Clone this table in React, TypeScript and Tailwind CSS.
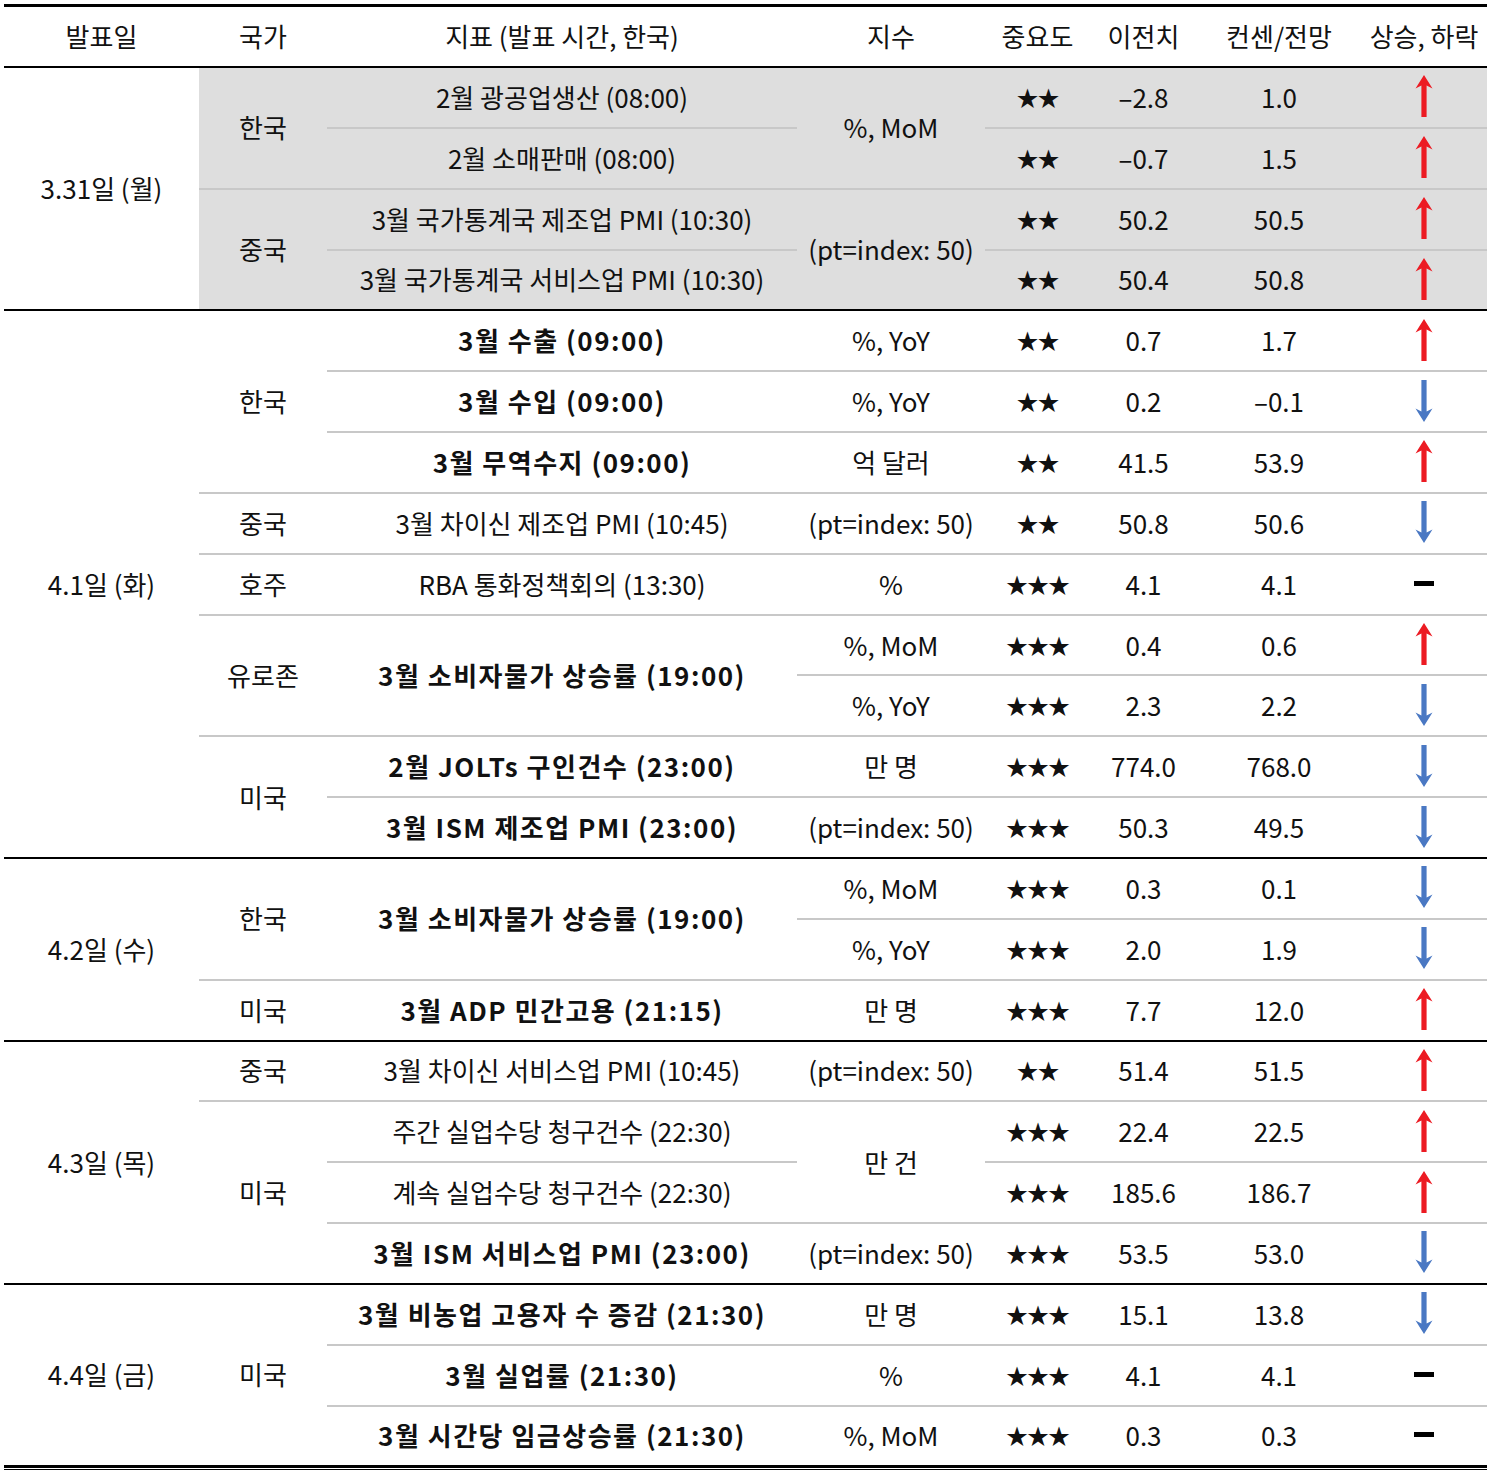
import React from 'react'

type Cell = { t: string; span?: number; bold?: boolean }
type Row = {
  date?: Cell
  country?: Cell
  ind?: Cell
  unit?: Cell
  stars: number
  prev: string
  cons: string
  dir: 'up' | 'down' | 'flat'
  last?: boolean
  gray?: boolean
}

const rows: Row[] = [
  // 3.31
  { gray: true, date: { t: '3.31일 (월)', span: 4 }, country: { t: '한국', span: 2 }, ind: { t: '2월 광공업생산 (08:00)' }, unit: { t: '%, MoM', span: 2 }, stars: 2, prev: '–2.8', cons: '1.0', dir: 'up' },
  { gray: true, ind: { t: '2월 소매판매 (08:00)' }, stars: 2, prev: '–0.7', cons: '1.5', dir: 'up' },
  { gray: true, country: { t: '중국', span: 2 }, ind: { t: '3월 국가통계국 제조업 PMI (10:30)' }, unit: { t: '(pt=index: 50)', span: 2 }, stars: 2, prev: '50.2', cons: '50.5', dir: 'up' },
  { gray: true, last: true, ind: { t: '3월 국가통계국 서비스업 PMI (10:30)' }, stars: 2, prev: '50.4', cons: '50.8', dir: 'up' },
  // 4.1
  { date: { t: '4.1일 (화)', span: 9 }, country: { t: '한국', span: 3 }, ind: { t: '3월 수출 (09:00)', bold: true }, unit: { t: '%, YoY' }, stars: 2, prev: '0.7', cons: '1.7', dir: 'up' },
  { ind: { t: '3월 수입 (09:00)', bold: true }, unit: { t: '%, YoY' }, stars: 2, prev: '0.2', cons: '–0.1', dir: 'down' },
  { ind: { t: '3월 무역수지 (09:00)', bold: true }, unit: { t: '억 달러' }, stars: 2, prev: '41.5', cons: '53.9', dir: 'up' },
  { country: { t: '중국' }, ind: { t: '3월 차이신 제조업 PMI (10:45)' }, unit: { t: '(pt=index: 50)' }, stars: 2, prev: '50.8', cons: '50.6', dir: 'down' },
  { country: { t: '호주' }, ind: { t: 'RBA 통화정책회의 (13:30)' }, unit: { t: '%' }, stars: 3, prev: '4.1', cons: '4.1', dir: 'flat' },
  { country: { t: '유로존', span: 2 }, ind: { t: '3월 소비자물가 상승률 (19:00)', bold: true, span: 2 }, unit: { t: '%, MoM' }, stars: 3, prev: '0.4', cons: '0.6', dir: 'up' },
  { unit: { t: '%, YoY' }, stars: 3, prev: '2.3', cons: '2.2', dir: 'down' },
  { country: { t: '미국', span: 2 }, ind: { t: '2월 JOLTs 구인건수 (23:00)', bold: true }, unit: { t: '만 명' }, stars: 3, prev: '774.0', cons: '768.0', dir: 'down' },
  { last: true, ind: { t: '3월 ISM 제조업 PMI (23:00)', bold: true }, unit: { t: '(pt=index: 50)' }, stars: 3, prev: '50.3', cons: '49.5', dir: 'down' },
  // 4.2
  { date: { t: '4.2일 (수)', span: 3 }, country: { t: '한국', span: 2 }, ind: { t: '3월 소비자물가 상승률 (19:00)', bold: true, span: 2 }, unit: { t: '%, MoM' }, stars: 3, prev: '0.3', cons: '0.1', dir: 'down' },
  { unit: { t: '%, YoY' }, stars: 3, prev: '2.0', cons: '1.9', dir: 'down' },
  { last: true, country: { t: '미국' }, ind: { t: '3월 ADP 민간고용 (21:15)', bold: true }, unit: { t: '만 명' }, stars: 3, prev: '7.7', cons: '12.0', dir: 'up' },
  // 4.3
  { date: { t: '4.3일 (목)', span: 4 }, country: { t: '중국' }, ind: { t: '3월 차이신 서비스업 PMI (10:45)' }, unit: { t: '(pt=index: 50)' }, stars: 2, prev: '51.4', cons: '51.5', dir: 'up' },
  { country: { t: '미국', span: 3 }, ind: { t: '주간 실업수당 청구건수 (22:30)' }, unit: { t: '만 건', span: 2 }, stars: 3, prev: '22.4', cons: '22.5', dir: 'up' },
  { ind: { t: '계속 실업수당 청구건수 (22:30)' }, stars: 3, prev: '185.6', cons: '186.7', dir: 'up' },
  { last: true, ind: { t: '3월 ISM 서비스업 PMI (23:00)', bold: true }, unit: { t: '(pt=index: 50)' }, stars: 3, prev: '53.5', cons: '53.0', dir: 'down' },
  // 4.4
  { date: { t: '4.4일 (금)', span: 3 }, country: { t: '미국', span: 3 }, ind: { t: '3월 비농업 고용자 수 증감 (21:30)', bold: true }, unit: { t: '만 명' }, stars: 3, prev: '15.1', cons: '13.8', dir: 'down' },
  { ind: { t: '3월 실업률 (21:30)', bold: true }, unit: { t: '%' }, stars: 3, prev: '4.1', cons: '4.1', dir: 'flat' },
  { last: true, ind: { t: '3월 시간당 임금상승률 (21:30)', bold: true }, unit: { t: '%, MoM' }, stars: 3, prev: '0.3', cons: '0.3', dir: 'flat' }
]

function Arrow({ dir }: { dir: 'up' | 'down' | 'flat' }) {
  if (dir === 'flat') return <div className="mx-auto w-[20px] h-[5px] bg-black" />
  const up = dir === 'up'
  return (
    <svg width="20" height="42" viewBox="0 0 20 42" className="mx-auto block">
      <path
        d="M10 0 L18.5 13.5 L12.6 10.5 L12.6 42 L7.4 42 L7.4 10.5 L1.5 13.5 Z"
        fill={up ? '#ec1b23' : '#4a78c3'}
        transform={up ? undefined : 'rotate(180 10 21)'}
      />
    </svg>
  )
}

function borderFor(i: number, span = 1) {
  const end = rows[i + span - 1]
  if (i + span - 1 === rows.length - 1) return 'border-b-[3px] border-black'
  return end.last ? 'border-b-2 border-black' : 'border-b-2 border-[#c8c8c8]'
}

export default function App() {
  const headers = ['발표일', '국가', '지표 (발표 시간, 한국)', '지수', '중요도', '이전치', '컨센/전망', '상승, 하락']
  const widths = [195, 128, 470, 188, 105, 107, 164, 126]

  return (
    <div className="bg-white w-[1491px] min-h-[1474px] pt-[4px] pl-[4px] font-['Noto_Sans_CJK_KR',sans-serif] text-[26px] text-[#111]">
      <div className="w-[1483px] border-b border-black pb-px">
        <table className="table-fixed border-collapse w-[1483px] border-t-[3px] border-black">
          <colgroup>
            {widths.map((w, i) => (
              <col key={i} style={{ width: w }} />
            ))}
          </colgroup>
          <thead>
            <tr className="h-[61.5px]">
              {headers.map((h) => (
                <th key={h} className="font-normal text-center align-middle p-0 pb-[2px] border-b-2 border-black">
                  {h}
                </th>
              ))}
            </tr>
          </thead>
          <tbody>
            {rows.map((r, i) => {
              const bg = r.gray ? 'bg-[#dedede]' : 'bg-white'
              const base = `p-0 pb-[2px] text-center align-middle whitespace-nowrap ${bg}`
              return (
                <tr key={i} className="h-[60.85px]">
                  {r.date && (
                    <td rowSpan={r.date.span ?? 1} className={`p-0 pb-[2px] text-center align-middle whitespace-nowrap bg-white ${borderFor(i, r.date.span)}`}>
                      {r.date.t}
                    </td>
                  )}
                  {r.country && (
                    <td rowSpan={r.country.span ?? 1} className={`${base} ${borderFor(i, r.country.span)}`}>
                      {r.country.t}
                    </td>
                  )}
                  {r.ind && (
                    <td
                      rowSpan={r.ind.span ?? 1}
                      className={`${base} ${borderFor(i, r.ind.span)} ${r.ind.bold ? 'font-bold tracking-[1.5px]' : ''}`}
                    >
                      {r.ind.t}
                    </td>
                  )}
                  {r.unit && (
                    <td rowSpan={r.unit.span ?? 1} className={`${base} ${borderFor(i, r.unit.span)}`}>
                      {r.unit.t}
                    </td>
                  )}
                  <td className={`${base} ${borderFor(i)} text-[22px] tracking-[-1px]`}>{'★'.repeat(r.stars)}</td>
                  <td className={`${base} ${borderFor(i)}`}>{r.prev}</td>
                  <td className={`${base} ${borderFor(i)}`}>{r.cons}</td>
                  <td className={`${base} ${borderFor(i)}`}>
                    <Arrow dir={r.dir} />
                  </td>
                </tr>
              )
            })}
          </tbody>
        </table>
      </div>
    </div>
  )
}
